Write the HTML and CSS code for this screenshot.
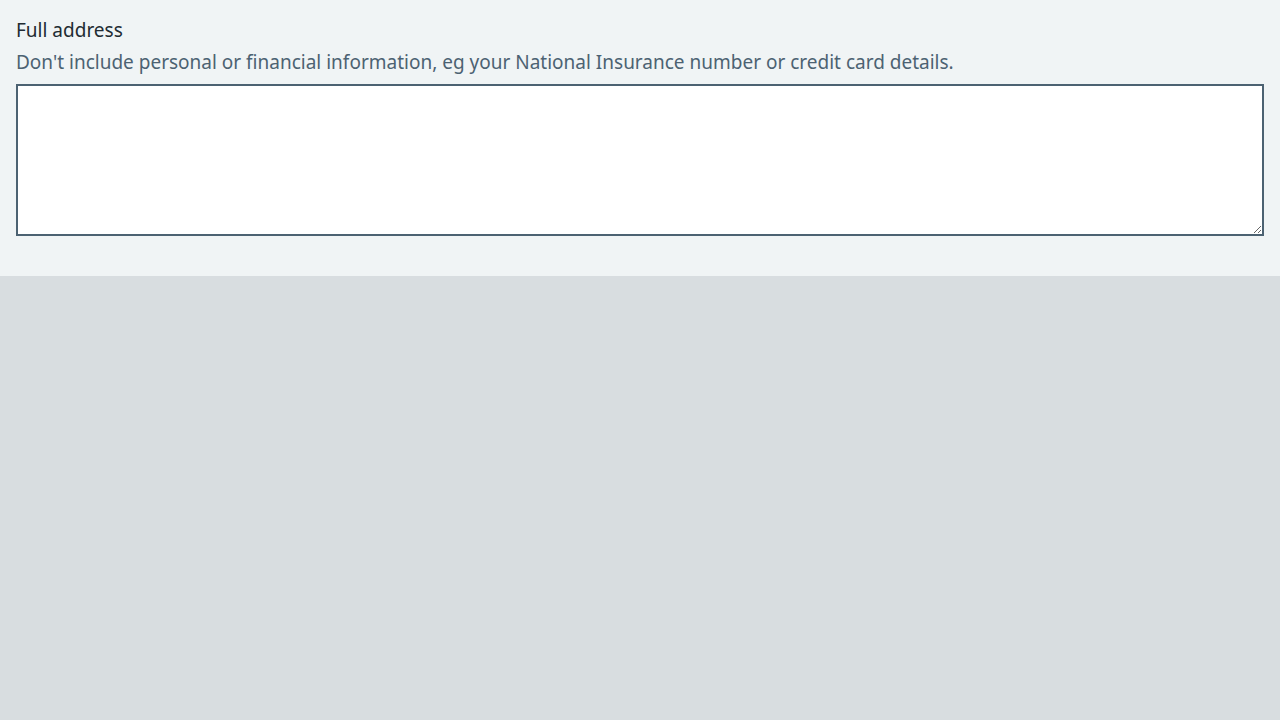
FILE: index.html
```html
<!DOCTYPE html>
<html lang="en">
<head>
<meta charset="utf-8">
<title>Full address</title>
<link rel="stylesheet" href="styles.css">
</head>
<body>
<div class="panel">
  <div class="form-group">
    <label class="label" for="address">Full address</label>
    <div class="hint" id="address-hint">Don't include personal or financial information, eg your National Insurance number or credit card details.</div>
    <textarea class="textarea" id="address" rows="5" aria-describedby="address-hint"></textarea>
  </div>
</div>
</body>
</html>
```
FILE: styles.css
```css
html, body {
  margin: 0;
  padding: 0;
  height: 100%;
}
body {
  background: #d8dde0;
  font-family: "Noto Sans", "Open Sans", sans-serif;
  color: #212b32;
}
.panel {
  background: #f0f4f5;
  padding: 16px 16px 16px;
}
.form-group {
  display: flex;
  flex-direction: column;
  margin-bottom: 24px;
}
.label {
  display: block;
  font-size: 19px;
  line-height: 28px;
  margin-bottom: 4px;
  color: #212b32;
}
.hint {
  font-size: 19px;
  line-height: 28px;
  color: #4c6272;
  margin-bottom: 8px;
}
.textarea {
  display: block;
  box-sizing: border-box;
  width: 100%;
  height: 152px;
  margin: 0;
  padding: 4px;
  border: 2px solid #4c6272;
  border-radius: 0;
  background: #ffffff;
  font-family: inherit;
  font-size: 19px;
  line-height: 28px;
  resize: vertical;
}
```
